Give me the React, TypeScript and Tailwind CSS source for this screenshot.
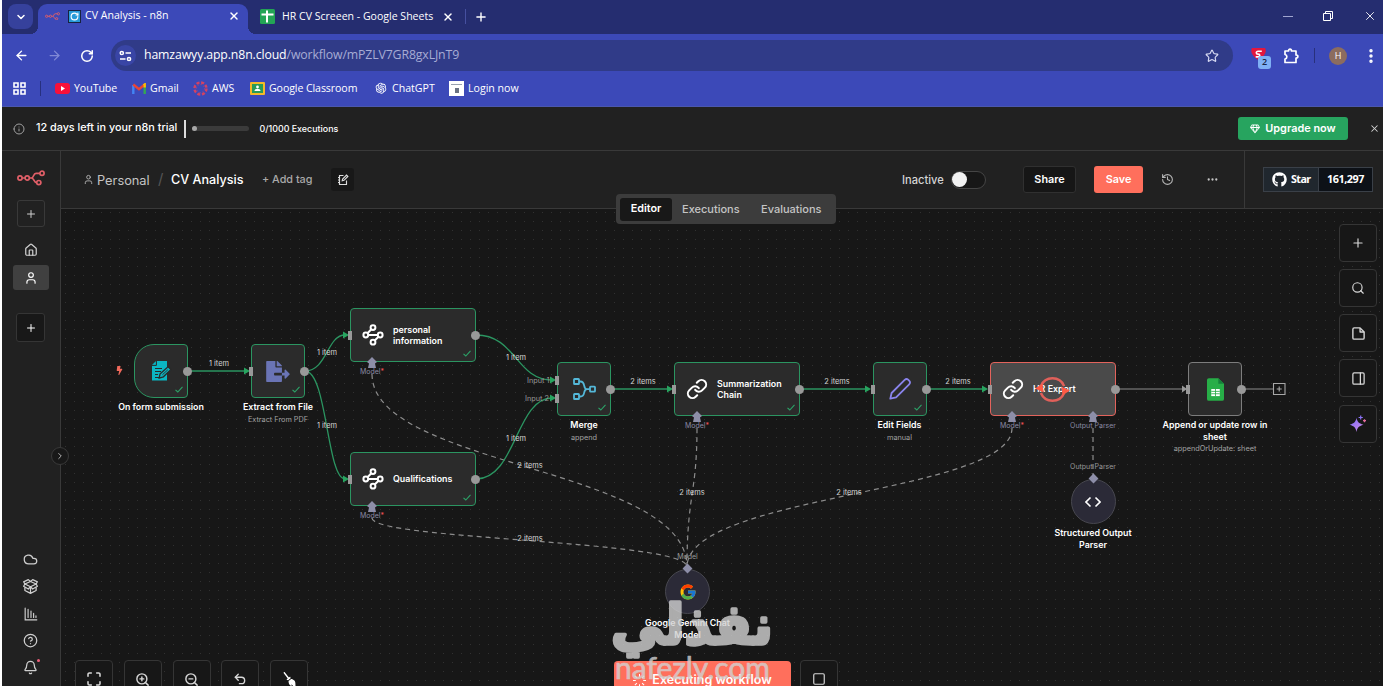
import type { ReactNode } from "react";
import {
  ArrowLeft,
  ArrowRight,
  Bell,
  ChevronDown,
  ChevronRight,
  CircleAlert,
  CircleHelp,
  Cloud,
  Ellipsis,
  EllipsisVertical,
  History,
  House,
  Link,
  Maximize,
  PanelRight,
  Plus,
  RotateCw,
  Search,
  Square,
  Star,
  Undo2,
  User,
  X,
  ZoomIn,
  ZoomOut,
} from "lucide-react";
import { FaBolt, FaBroom, FaFileExport, FaGithub, FaRegGem } from "react-icons/fa";
import { FcGoogle } from "react-icons/fc";
import { AiOutlineOpenAI } from "react-icons/ai";

/* ---------- small drawings ---------- */

const N8nLogo = ({ className }: { className?: string }) => (
  <svg viewBox="0 0 28 16" fill="none" stroke="#e05f68" strokeWidth="1.7" className={className}>
    <circle cx="3" cy="8" r="2.1" />
    <circle cx="10.2" cy="8" r="2.1" />
    <circle cx="25" cy="3.3" r="2.1" />
    <circle cx="21.8" cy="12.6" r="2.1" />
    <path d="M5.1 8h3M12.3 8h2.2c2.5 0 1.6-4.7 4.5-4.7h3.9M14.5 8c2.8 0 2 4.6 5.2 4.6" />
  </svg>
);

const ClassifyIcon = () => (
  <svg viewBox="0 0 22 22" fill="none" stroke="#fff" strokeWidth="2" className="size-[22px] shrink-0">
    <circle cx="11" cy="3.6" r="2.4" />
    <circle cx="3.8" cy="11" r="2.4" />
    <circle cx="18.2" cy="11" r="2.4" />
    <circle cx="11" cy="18.2" r="2.4" />
    <path d="M9.300 5.300 5.500 9.300M6.200 11h9.600M16.500 12.700l-3.800 3.800" />
  </svg>
);

const FormIcon = () => (
  <svg viewBox="0 0 22 22" className="size-[22px]">
    <path d="M6 1h11v19.5H2V5z" fill="#0bb5c2" />
    <path d="M2 5.4h4.4V1" fill="none" stroke="#292929" strokeWidth="1" />
    <path d="M5 8.5h7M5 11.5h6M5 14.5h3M5 17.5h5" stroke="#292929" strokeWidth="1.2" />
    <path d="m10 14 8-7.2 3 2.6-7.6 7.4-4.2 1.2z" fill="#0bb5c2" stroke="#292929" strokeWidth="1.3" />
    <path d="m12.4 14.8 5.4-5" stroke="#292929" strokeWidth="0.9" />
  </svg>
);

const MergeIcon = () => (
  <svg viewBox="0 0 24 24" fill="none" stroke="#54b8d9" strokeWidth="1.8" className="size-6">
    <rect x="2" y="2" width="5" height="5" rx="0.6" />
    <rect x="2" y="17" width="5" height="5" rx="0.6" />
    <rect x="18" y="9.7" width="5" height="5" rx="0.6" />
    <path d="M7 4.500h1.500c5.500 0 2 7.700 6.500 7.700h3M7 19.500h1.500c5.500 0 2-7.300 6.500-7.300" />
  </svg>
);

const PenIcon = () => (
  <svg viewBox="0 0 22 22" fill="none" stroke="#8a84ec" strokeWidth="1.8" strokeLinejoin="round" className="size-[22px]">
    <path d="M1.300 20.700 2.600 15 15.700 1.900c1.200-1.100 2.400-1.100 3.400-.2l1.200 1.200c1 1 1 2.300-.1 3.400L7.100 19.300z" />
  </svg>
);

const SheetIcon = () => (
  <svg viewBox="0 0 18 24" className="h-[23px] w-[17px]">
    <path d="M2 0h10l6 6v16a2 2 0 0 1-2 2H2a2 2 0 0 1-2-2V2a2 2 0 0 1 2-2z" fill="#27ae47" />
    <path d="M12 0l6 6h-6z" fill="#15803a" />
    <rect x="4.500" y="11.500" width="9" height="7.500" fill="#fff" />
    <path d="M4.500 14h9M4.500 16.500h9M9 11.500V19" stroke="#27ae47" strokeWidth="0.900" />
  </svg>
);

const NoteIcon = () => (
  <svg viewBox="0 0 24 24" fill="none" stroke="currentColor" strokeWidth="2.2" strokeLinejoin="round" className="size-[15px]">
    <path d="M14.500 3H5a2 2 0 0 0-2 2v14a2 2 0 0 0 2 2h14a2 2 0 0 0 2-2V9.500z" />
    <path d="M14.500 3v6.500H21" />
  </svg>
);

const TemplatesIcon = () => (
  <svg viewBox="0 0 24 24" fill="none" stroke="currentColor" strokeWidth="2" strokeLinejoin="round" className="size-[15px]">
    <path d="M12 12.500v10M3 13v5.500l9 4.500 9-4.500V13" />
    <path d="M12 12.500 3 8 1 11.500l7.500 4.500zM12 12.500 21 8l2 3.500-7.500 4.500z" />
    <path d="M3 8 1 4.500 8.500 1 12 4l3.500-3L23 4.500 21 8M3 8l9-4 9 4" />
  </svg>
);

const ChartIcon = () => (
  <svg viewBox="0 0 24 24" fill="none" stroke="currentColor" strokeWidth="2" strokeLinecap="round" className="size-[14px]">
    <path d="M2 2v20h20M7 18V4M12 18V7M16.500 18v-7M20.500 18v-3" />
  </svg>
);

const ReadmeIcon = () => (
  <svg viewBox="0 0 24 24" fill="none" stroke="currentColor" strokeWidth="2.300" className="size-3">
    <path d="M13 3H5v18h14v-8M2 7h4M2 12h4M2 17h4" />
    <path d="m10.500 13.500.8-3.500L19 2.300l2.700 2.700-7.700 7.700z" />
  </svg>
);

const SparkIcon = () => (
  <svg viewBox="0 0 18 18" className="size-[18px]">
    <defs>
      <linearGradient id="spark" x1="0" y1="0" x2="1" y2="1">
        <stop offset="0.2" stopColor="#8b72f5" />
        <stop offset="1" stopColor="#d48be8" />
      </linearGradient>
    </defs>
    <path d="M7.500 2.800c.8 4 2 5.500 7 7-5 1.500-6.200 3-7 7.200-.8-4.200-2-5.700-6.900-7.200 4.900-1.500 6.100-3 6.900-7z" fill="url(#spark)" />
    <path d="M11.700.4v4.200M9.600 2.500h4.200" stroke="#8b72f5" strokeWidth="1.200" />
    <path d="M15.500 4.200v3M14 5.700h3" stroke="#e26d9f" strokeWidth="1.300" />
  </svg>
);

const RunningIcon = () => (
  <svg viewBox="0 0 36 32" className="h-[31px] w-[35px]">
    <path d="M6 12.500a13 13 0 0 1 24 0M30 19.500a13 13 0 0 1-24 0" fill="none" stroke="#e0605a" strokeWidth="2.600" />
    <path d="m0 15 7.500-5 1.500 9zM27 13l1.500 9 7.500-5z" fill="#ff5a45" />
  </svg>
);

const Check = () => (
  <svg viewBox="0 0 8 7" fill="none" stroke="#2ca468" strokeWidth="1.1" className="absolute right-1 bottom-1 h-[7px] w-2">
    <path d="M0.500 3.800 2.800 6 7.500 0.800" />
  </svg>
);

/* ---------- browser ---------- */

const Bookmark = ({ icon, label, className }: { icon: ReactNode; label: string; className: string }) => (
  <div className={`flex shrink-0 items-center gap-1 whitespace-nowrap ${className}`}>
    {icon}
    <span>{label}</span>
  </div>
);

const Browser = () => (
  <div className="h-[108px] shrink-0 bg-[#3c49b8] font-['Open_Sans',sans-serif] text-[10.600px] text-white">
    {/* Tab strip */}
    <div className="flex h-[34px] bg-[#252d70]">
      <div className="mt-1 ml-1.5 flex size-[25px] items-center justify-center rounded-lg bg-[#36419c]">
        <ChevronDown className="size-3" strokeWidth={3} />
      </div>
      <div className="relative mt-1 ml-[5px] flex h-[30px] w-[210px] items-center rounded-t-[9px] bg-[#3c49b8] pb-1.5">
        <div className="absolute bottom-0 -left-2 size-2 bg-[radial-gradient(circle_at_0_0,transparent_8px,#3c49b8_8px)]" />
        <div className="absolute -right-2 bottom-0 size-2 bg-[radial-gradient(circle_at_100%_0,transparent_8px,#3c49b8_8px)]" />
        <N8nLogo className="ml-[7px] w-[15px]" />
        <div className="ml-[8px] flex size-[13px] items-center justify-center border border-[#17233f] bg-[#279ad8]">
          <RotateCw className="size-[9px]" strokeWidth={3} />
        </div>
        <span className="ml-[4px] w-[139px] text-[10.600px] whitespace-nowrap">CV Analysis - n8n</span>
        <X className="ml-1 size-3 shrink-0" strokeWidth={2.800} />
      </div>
      <div className="flex h-[33px] items-center">
        <svg viewBox="0 0 15 15" className="ml-3 size-[15px]">
          <rect width="15" height="15" rx="1.500" fill="#23a455" />
          <path d="M1.500 5.500h12M7 1.500v12" stroke="#fff" strokeWidth="2" />
        </svg>
        <span className="ml-[7px] w-[160px] text-[10.550px] whitespace-nowrap">HR CV Screeen - Google Sheets</span>
        <X className="size-3" strokeWidth={2.800} />
        <div className="ml-[11px] h-[15px] w-px bg-[#4650a0]" />
        <Plus className="ml-[8px] size-3.5" strokeWidth={2.400} />
      </div>
      <div className="ml-auto flex h-8 items-center pr-1.5">
        <div className="mr-[30px] h-px w-[10px] bg-[#a0a5d0]" />
        <svg viewBox="0 0 10 10" fill="none" stroke="#fff" className="mr-[30px] size-2.5">
          <path d="M.5 2.500h7v7h-7zM2.500 2.500v-2h7v7h-2" />
        </svg>
        <X className="size-3.5" strokeWidth={1.500} />
      </div>
    </div>

    {/* Address row */}
    <div className="flex h-[43px] items-center">
      <ArrowLeft className="ml-3 size-[15px]" strokeWidth={2.200} />
      <ArrowRight className="ml-[18px] size-[15px] text-[#8189d6]" strokeWidth={2} />
      <RotateCw className="ml-[18px] size-[14px]" strokeWidth={2.600} />
      <div className="ml-[17px] flex h-[31px] w-[1122px] shrink-0 items-center rounded-full bg-[#303b88] pl-[4px]">
        <div className="flex size-[21px] items-center justify-center rounded-full bg-[#3945a5]">
          <svg viewBox="0 0 13 12" fill="none" stroke="#fff" strokeWidth="1.500" className="w-[13px]">
            <circle cx="2.800" cy="3" r="1.600" />
            <path d="M6.500 3H12M1 9h5.500" />
            <circle cx="10" cy="9" r="1.600" />
          </svg>
        </div>
        <span className="ml-[8px] text-[12.300px] tracking-[-0.130px] text-[#a7acd4]">
          <span className="text-white">hamzawyy.app.n8n.cloud</span>/workflow/mPZLV7GR8gxLJnT9
        </span>
        <Star className="mr-3.5 ml-auto size-[14px] text-[#d7daf2]" strokeWidth={2} />
      </div>
      <div className="relative ml-[18px] h-5 w-[18px] shrink-0">
        <svg viewBox="0 0 16 14" className="mt-0.5 w-[15px]">
          <path d="M1 0h14c2 4 0 8-7 13C1 8-1 4 1 0z" fill="#e3173e" />
          <path d="M11.500 3.500H7.500c-2.500 0-2.500 3 0 3s2.500 3 0 3H5" fill="none" stroke="#fff" strokeWidth="1.700" />
        </svg>
        <div className="absolute -right-0.5 -bottom-[3px] flex size-[13px] items-center justify-center rounded-[3px] bg-[#7fb0f5] text-[9px] font-semibold text-[#182544]">2</div>
      </div>
      <svg viewBox="0 0 16 16" fill="none" stroke="#fff" strokeWidth="1.700" strokeLinejoin="round" className="ml-[14px] size-4 shrink-0">
        <path d="M2 3h3.500c0-2.500 3-2.500 3 0H13v4c2.500 0 2.500 3 0 3v4.500H2V11c2.500-.5 2.500-4 0-4.500z" />
      </svg>
      <div className="ml-[15px] h-[15px] w-px bg-[#28307c]" />
      <div className="ml-[14px] flex size-[18px] shrink-0 items-center justify-center rounded-full bg-[#8c6c5f] text-[9px]">H</div>
      <EllipsisVertical className="ml-[15px] size-[18px] shrink-0" strokeWidth={2.600} />
    </div>

    {/* Bookmarks */}
    <div className="flex h-[23px] items-center">
      <svg viewBox="0 0 13 13" fill="none" stroke="#fff" strokeWidth="1.600" className="ml-[11px] size-[13px]">
        <path d="M1 1h4v4H1zM8 1h4v4H8zM1 8h4v4H1zM8 8h4v4H8z" />
      </svg>
      <div className="ml-3.5 h-[15px] w-px bg-[#27307f]" />
      <Bookmark
        className="ml-[14px] w-[77px] tracking-[-0.050px]"
        label="YouTube"
        icon={
          <svg viewBox="0 0 15 11" className="w-[15px]">
            <rect width="15" height="11" rx="3" fill="#f8103a" />
            <path d="M6 3v5l4-2.500z" fill="#fff" />
          </svg>
        }
      />
      <Bookmark
        className="w-[61px]"
        label="Gmail"
        icon={
          <svg viewBox="0 0 14 11" fill="none" strokeWidth="2.400" className="w-[14px]">
            <path d="M1.300 11V2" stroke="#4285f4" />
            <path d="M12.700 11V2" stroke="#34a853" />
            <path d="M1.300 1.500 7 6.200l5.700-4.700" stroke="#ea4335" />
            <path d="M11.600 2.400l1.100-.9v3" stroke="#fbbc04" />
          </svg>
        }
      />
      <Bookmark
        className="w-[57px]"
        label="AWS"
        icon={
          <svg viewBox="0 0 15 15" fill="none" stroke="#d34263" className="w-[15px]">
            <circle cx="7.500" cy="7.500" r="6" strokeWidth="2.400" strokeDasharray="3 1.700" />
            <circle cx="7.500" cy="7.500" r="4" strokeWidth="1" strokeDasharray="1 2.100" />
          </svg>
        }
      />
      <Bookmark
        className="w-[124px] tracking-[-0.090px]"
        label="Google Classroom"
        icon={
          <svg viewBox="0 0 15 13" className="w-[15px]">
            <rect width="15" height="13" rx="1" fill="#f4b928" />
            <rect x="2" y="2" width="11" height="9" fill="#289b58" />
            <circle cx="7.500" cy="5" r="1.400" fill="#fff" />
            <path d="M4.500 9c0-3 6-3 6 0z" fill="#fff" />
          </svg>
        }
      />
      <Bookmark className="w-[75px]" label="ChatGPT" icon={<AiOutlineOpenAI className="size-3.5" />} />
      <Bookmark
        className=""
        label="Login now"
        icon={
          <div className="flex size-[15px] flex-col items-center bg-white pt-[3px]">
            <div className="h-px w-[11px] bg-gray-400" />
            <div className="mt-[3px] h-[5px] w-1 bg-gray-500" />
          </div>
        }
      />
    </div>
    <div className="mt-[6px] h-px bg-[#4b57ae]" />
    <div className="h-px bg-[#212121]" />
  </div>
);

/* ---------- n8n chrome ---------- */

const TrialBanner = () => (
  <div className="flex h-[43px] shrink-0 items-center border-b border-[#393939] bg-[#212121] pb-px text-white">
    <CircleAlert className="ml-[11px] size-3 rotate-180 text-[#a0a0a0]" strokeWidth={2} />
    <span className="ml-[11px] w-[148px] text-[10.800px] font-medium whitespace-nowrap">12 days left in your n8n trial</span>
    <div className="h-[18px] w-[1.500px] bg-[#dcdcdc]" />
    <div className="ml-1.5 flex h-[5px] w-[57px] items-center rounded-full bg-[#3b3b3b]">
      <div className="size-[5px] rounded-full bg-[#a8a8a8]" />
    </div>
    <span className="ml-[11px] text-[8.900px] font-medium">0/1000 Executions</span>
    <button className="ml-auto flex h-[23px] w-[110px] items-center justify-center gap-[5px] rounded-[3px] bg-[#27a45f] text-[10.900px] font-semibold whitespace-nowrap">
      <FaRegGem className="size-2.5" />
      Upgrade now
    </button>
    <X className="mr-[3px] ml-[21px] size-[11px] text-[#d5d5d5]" strokeWidth={2.200} />
  </div>
);

const Sidebar = () => (
  <aside className="relative flex w-[59px] shrink-0 flex-col items-center border-r border-[#393939] bg-[#212121] pr-px text-[#cfcfcf]">
    <N8nLogo className="mt-[19px] w-7" />
    <div className="mt-[14px] flex h-[27px] w-7 items-center justify-center rounded-[3px] border border-[#393939]">
      <Plus className="size-3" />
    </div>
    <House className="mt-[16px] size-[14px]" strokeWidth={2.100} />
    <div className="mt-[8px] flex h-[25px] w-9 items-center justify-center rounded-[3px] bg-[#404040] text-white">
      <User className="size-[14px]" />
    </div>
    <div className="mt-[23px] flex size-[29px] items-center justify-center rounded-[3px] border border-[#353535] bg-[#181818] text-white">
      <Plus className="size-3" />
    </div>
    <div className="mt-auto flex flex-col items-center pb-[5px] *:flex *:h-[27px] *:items-center">
      <div><Cloud className="size-[15px]" /></div>
      <div><TemplatesIcon /></div>
      <div><ChartIcon /></div>
      <div><CircleHelp className="size-[15px]" /></div>
      <div className="relative">
        <Bell className="size-[15px]" />
        <span className="absolute top-[5px] -right-[2px] size-[3px] rounded-full bg-[#f0607a]" />
      </div>
    </div>
    <div className="absolute top-[296px] -right-[9px] z-20 flex size-[18px] items-center justify-center rounded-full border border-[#393939] bg-[#181818]">
      <ChevronRight className="size-2.5" />
    </div>
  </aside>
);

const Header = () => (
  <header className="relative z-10 flex h-[58px] shrink-0 items-center border-b border-[#393939] bg-[#212121] text-white">
    <User className="ml-[22px] size-[11px] text-[#b5b5b5]" />
    <span className="ml-[3px] w-[61px] pt-0.5 text-[12.800px] text-[#c4c4c4]">Personal</span>
    <span className="w-[13px] text-[15px] text-[#555]">/</span>
    <span className="w-[91px] pt-0.5 text-[12.600px] font-medium whitespace-nowrap">CV Analysis</span>
    <span className="w-[69px] pt-0.5 text-[10.800px] font-medium whitespace-nowrap text-[#a9a9a9]">+ Add tag</span>
    <div className="flex size-[23px] items-center justify-center rounded-[3px] bg-[#181818] text-[#ddd]">
      <ReadmeIcon />
    </div>

    <div className="ml-auto flex h-full items-center">
      <span className="w-[49px] pt-0.5 text-[11.100px] font-medium text-[#d5d5d5]">Inactive</span>
      <div className="flex h-[18px] w-[35px] items-center rounded-full border border-[#454545] bg-[#171717]">
        <div className="size-[15px] rounded-full bg-[#f2f2f2]" />
      </div>
      <button className="ml-[37px] flex h-[27px] w-[53px] items-center justify-center rounded-[3px] border border-[#303030] bg-[#161616] pt-0.5 text-[10.800px] font-semibold">Share</button>
      <button className="ml-[18px] flex h-[27px] w-[49px] items-center justify-center rounded-[3px] bg-[#ff6f5c] pt-0.5 text-[10.800px] font-semibold">Save</button>
      <History className="ml-[18px] size-[13px] text-[#b5b5b5]" />
      <Ellipsis className="ml-[32px] size-[13px] text-[#c5c5c5]" strokeWidth={2.200} />
      <div className="ml-[25px] h-full w-px bg-[#393939]" />
      <div className="mr-2.5 ml-[18px] flex h-[25px] w-[110px] items-center border border-[#3a4048] font-['Noto_Sans',sans-serif] text-[10.800px] font-bold">
        <div className="flex h-full w-[55px] items-center gap-1 border-r border-[#3a4048] bg-[#20272e] pl-2">
          <FaGithub className="size-[15px] shrink-0" />
          <span className="tracking-[-0.600px]">Star</span>
        </div>
        <div className="flex h-full flex-1 items-center justify-center bg-[#0d1117] tracking-[-0.450px]">161,297</div>
      </div>
    </div>

    {/* View switch hangs over the canvas edge */}
    <div className="absolute top-[43px] left-[555px] flex h-[30px] w-[220px] items-center rounded-[4px] bg-[#3c3c3c] text-[11px] font-medium text-[#c4c4c4]">
      <span className="ml-1 flex h-[23px] w-[52px] items-center justify-center rounded-[3px] bg-[#181818] text-[10.800px] font-semibold text-white">Editor</span>
      <span className="ml-2.5 w-[79px]">Executions</span>
      <span>Evaluations</span>
    </div>
  </header>
);

/* ---------- workflow ---------- */

type NodeProps = {
  x: number;
  y: number;
  icon: ReactNode;
  name: string;
  sub?: string;
  wide?: boolean;
  done?: boolean;
  box?: string;
  plugs?: { x: number; label: string; required?: boolean }[];
  inputs?: number[];
};

const WorkflowNode = ({ x, y, icon, name, sub, wide, done = true, box = "rounded-[4px] border-[#2b9561] bg-[#2b2b2b]", plugs = [], inputs = [27] }: NodeProps) => (
  <div className="absolute" style={{ left: x, top: y }}>
    <div className={`relative flex h-[54px] items-center border ${box} ${wide ? "w-[126px] gap-[9px] pl-[11px]" : "w-[54px] justify-center"}`}>
      {icon}
      {wide && <span className="w-[72px] text-[8.900px] leading-[11.500px] font-semibold text-white">{name}</span>}
      {done && <Check />}
      <span className="absolute top-[22px] -right-[5px] size-[9px] rounded-full bg-[#999]" />
      {inputs.map((top) => (
        <span key={top} className="absolute -left-[3px] h-[9px] w-1 bg-[#999]" style={{ top: top - 5 }} />
      ))}
      {plugs.map((plug) => (
        <div key={plug.label} className="absolute top-[48px] flex w-20 -translate-x-1/2 flex-col items-center" style={{ left: plug.x }}>
          <svg viewBox="0 0 10 11" className="h-[11px] w-[10px]">
            <path d="M5 0l5 5-2 1.500 1 4.500H1l1-4.500L0 5z" fill="#8d8ea8" />
          </svg>
          <span className="text-[7px] leading-[8px] whitespace-nowrap text-[#8b8ba4]">
            {plug.label}
            {plug.required && <span className="text-[#f2545b]">*</span>}
          </span>
        </div>
      ))}
    </div>
    {!wide && (
      <div className="absolute top-[57px] left-[27px] w-[112px] -translate-x-1/2 text-center">
        <div className="text-[8.850px] leading-[11.500px] font-semibold text-white">{name}</div>
        <div className="mt-[2px] text-[7.300px] leading-[10px] text-[#a3a3a3]">{sub}</div>
      </div>
    )}
  </div>
);

const SubNode = ({ x, y, icon, name, input }: { x: number; y: number; icon: ReactNode; name: string; input: string }) => (
  <div className="absolute flex w-[92px] -translate-x-1/2 flex-col items-center" style={{ left: x, top: y }}>
    <span className="absolute -top-[17px] text-[7px] leading-[9px] whitespace-nowrap text-[#9a9a9a]">{input}</span>
    <span className="absolute -top-[4px] size-[7px] rotate-45 bg-[#8d8ea8]" />
    <div className="flex size-[45px] items-center justify-center rounded-full border border-[#47474f] bg-[#2b2a37]">{icon}</div>
    <div className="mt-[3px] text-center text-[8.850px] leading-[11.500px] font-semibold text-white">{name}</div>
  </div>
);

const doneEdges = [
  "M188 371H247",
  "M305 371C327 371 327 335 345 335",
  "M305 371C327 371 327 479 345 479",
  "M476 335C516 335 516 380 552 380",
  "M476 479C516 479 516 398 552 398",
  "M611 389H670",
  "M800 389H868",
  "M927 389H985",
];

const arrowHeads = [
  [250, 371],
  [349, 335],
  [349, 479],
  [556, 380],
  [556, 398],
  [673, 389],
  [871, 389],
  [988, 389],
];

const modelEdges = [
  "M372 374C372 467 687 467 687 567",
  "M372 518C372 540 687 540 687 567",
  "M697 428C697 494 687 494 687 567",
  "M1012 428C1012 494 687 494 687 567",
  "M1093 428V476",
];

const edgeLabels = [
  { x: 219, y: 364, text: "1 item" },
  { x: 327, y: 353, text: "1 item" },
  { x: 327, y: 426, text: "1 item" },
  { x: 516, y: 358, text: "1 item" },
  { x: 516, y: 439, text: "1 item" },
  { x: 643, y: 382, text: "2 items" },
  { x: 837, y: 382, text: "2 items" },
  { x: 958, y: 382, text: "2 items" },
  { x: 530, y: 466, text: "2 items" },
  { x: 530, y: 539, text: "2 items" },
  { x: 692, y: 493, text: "2 items" },
  { x: 849, y: 493, text: "2 items" },
];

const Workflow = () => (
  <div className="absolute -top-[209px] -left-[61px] h-[686px] w-[1383px]">
    <svg viewBox="0 0 1383 686" fill="none" className="absolute inset-0">
      {modelEdges.map((d) => (
        <path key={d} d={d} stroke="#8c8c8c" strokeWidth="1.200" strokeDasharray="5 4" />
      ))}
      {doneEdges.map((d) => (
        <path key={d} d={d} stroke="#2b9561" strokeWidth="1.300" />
      ))}
      {arrowHeads.map(([x, y]) => (
        <path key={`${x}-${y}`} d={`M${x} ${y}l-6 -3.500v7z`} fill="#27a45f" />
      ))}
      <path d="M1116 389h66M1242 389h31" stroke="#8c8c8c" strokeWidth="1.200" />
      <path d="M1187 389l-5-3.500v7z" fill="#999" />
      <path d="M1273.500 383.500h11.500v11h-11.500zM1279.200 386.500v5M1276.700 389h5" stroke="#a8a8a8" strokeWidth="1.100" />
    </svg>

    {edgeLabels.map((label) => (
      <span
        key={`${label.x}-${label.y}`}
        className="absolute -translate-x-1/2 -translate-y-1/2 text-[7.400px] leading-[10px] whitespace-nowrap text-[#d6d6d6]"
        style={{ left: label.x, top: label.y }}
      >
        {label.text}
      </span>
    ))}
    <span className="absolute top-[376px] left-[527px] text-[7.300px] leading-[10px] text-[#999]">Input 1</span>
    <span className="absolute top-[394px] left-[525px] text-[7.300px] leading-[10px] text-[#999]">Input 2</span>
    <FaBolt className="absolute top-[366px] left-[115px] size-[9px] text-[#f0695b]" />

    <WorkflowNode x={134} y={344} icon={<FormIcon />} name="On form submission" inputs={[]} box="rounded-l-[20px] rounded-r-[4px] border-[#2b9561] bg-[#2b2b2b]" />
    <WorkflowNode x={251} y={344} icon={<FaFileExport className="h-[21px] w-[24px] text-[#6a74b5]" />} name="Extract from File" sub="Extract From PDF" />
    <WorkflowNode x={350} y={308} wide icon={<ClassifyIcon />} name="personal information" plugs={[{ x: 21, label: "Model", required: true }]} />
    <WorkflowNode x={350} y={452} wide icon={<ClassifyIcon />} name="Qualifications" plugs={[{ x: 21, label: "Model", required: true }]} />
    <WorkflowNode x={557} y={362} icon={<MergeIcon />} name="Merge" sub="append" inputs={[18, 36]} />
    <WorkflowNode x={674} y={362} wide icon={<Link className="size-[22px] shrink-0 text-white" strokeWidth={2.200} />} name="Summarization Chain" plugs={[{ x: 22, label: "Model", required: true }]} />
    <WorkflowNode x={872.500} y={362} icon={<PenIcon />} name="Edit Fields" sub="manual" />
    <WorkflowNode
      x={990}
      y={362}
      wide
      done={false}
      box="rounded-[4px] border-[#e3635c] bg-[#4a4a4a]"
      icon={<Link className="size-[22px] shrink-0 text-white" strokeWidth={2.200} />}
      name="HR Expert"
      plugs={[
        { x: 21, label: "Model", required: true },
        { x: 102, label: "Output Parser" },
      ]}
    />
    <div className="absolute top-[374px] left-[1035px]">
      <RunningIcon />
    </div>
    <WorkflowNode x={1188} y={362} done={false} box="rounded-[4px] border-[#7d7d7d] bg-[#2b2b2b]" icon={<SheetIcon />} name="Append or update row in sheet" sub="appendOrUpdate: sheet" />

    <SubNode
      x={1093}
      y={479}
      input="Output Parser"
      name="Structured Output Parser"
      icon={
        <svg viewBox="0 0 16 12" fill="none" stroke="#fff" strokeWidth="1.600" className="w-4">
          <path d="M5.500 1.500 1 6l4.500 4.500M10.500 1.500 15 6l-4.500 4.500" />
        </svg>
      }
    />
    <SubNode x={687.5} y={569} input="Model" name="Google Gemini Chat Model" icon={<FcGoogle className="size-[18px]" />} />
  </div>
);

const CanvasButton = ({ children }: { children: ReactNode }) => (
  <div className="flex size-[38px] shrink-0 items-center justify-center rounded-[4px] border border-[#353535] bg-[#171717]">{children}</div>
);

const Canvas = () => (
  <main className="relative flex-1 overflow-hidden bg-[#171717] bg-[radial-gradient(circle_at_0.5px_0.5px,#313131_0.7px,transparent_0.8px)] bg-[length:9px_9px] bg-[position:4px_3px] text-[#d8d8d8]">
    <Workflow />

    <div className="absolute top-[14.500px] right-[6px] flex flex-col gap-[7.300px]">
      <CanvasButton><Plus className="size-[14px]" /></CanvasButton>
      <CanvasButton><Search className="size-[14px]" /></CanvasButton>
      <CanvasButton><NoteIcon /></CanvasButton>
      <CanvasButton><PanelRight className="size-[15px]" /></CanvasButton>
      <CanvasButton><SparkIcon /></CanvasButton>
    </div>

    <div className="absolute top-[451px] left-[14px] flex gap-[10.800px]">
      <CanvasButton><Maximize className="size-[16px]" strokeWidth={2.300} /></CanvasButton>
      <CanvasButton><ZoomIn className="size-[15px]" strokeWidth={2.300} /></CanvasButton>
      <CanvasButton><ZoomOut className="size-[15px]" strokeWidth={2.300} /></CanvasButton>
      <CanvasButton><Undo2 className="size-[14px]" strokeWidth={2.300} /></CanvasButton>
      <CanvasButton><FaBroom className="size-[15px] -rotate-90 text-white" /></CanvasButton>
    </div>

    <div className="absolute top-[451px] left-[553px] flex items-start gap-[9px]">
      <button className="mt-[1px] flex h-[38px] w-[177px] items-center justify-center gap-1.5 rounded-[4px] bg-[#ff6f5c] text-[12.500px] font-semibold whitespace-nowrap text-white">
        <svg viewBox="0 0 14 14" stroke="#fff" strokeWidth="1.100" className="size-[13px]">
          <path d="M7 0v3M7 11v3M0 7h3M11 7h3M2 2l2.200 2.200M9.800 9.800 12 12M2 12l2.200-2.200M9.800 4.200 12 2" />
        </svg>
        Executing workflow
      </button>
      <CanvasButton><Square className="size-[14px]" /></CanvasButton>
    </div>

    {/* Watermark */}
    <svg viewBox="0 0 180 100" fill="#d2d2d2" stroke="#d2d2d2" strokeLinejoin="round" className="absolute top-[386px] left-[543px] h-[100px] w-[180px] opacity-80">
      <text x="7" y="49" textLength="162" lengthAdjust="spacingAndGlyphs" direction="rtl" textAnchor="end" strokeWidth="3.500" className="font-['DejaVu_Sans',sans-serif] text-[55px] font-bold">نفذلي</text>
      <text x="11" y="84" textLength="155" lengthAdjust="spacingAndGlyphs" strokeWidth="0.700" className="font-['Lato',sans-serif] text-[30px]">nafezly.com</text>
    </svg>
  </main>
);

export default function App() {
  return (
    <div className="flex h-[686px] w-[1383px] flex-col overflow-hidden border-l-2 border-white bg-[#171717] font-['Inter',sans-serif]">
      <Browser />
      <TrialBanner />
      <div className="flex min-h-0 flex-1">
        <Sidebar />
        <div className="flex min-w-0 flex-1 flex-col">
          <Header />
          <Canvas />
        </div>
      </div>
    </div>
  );
}
